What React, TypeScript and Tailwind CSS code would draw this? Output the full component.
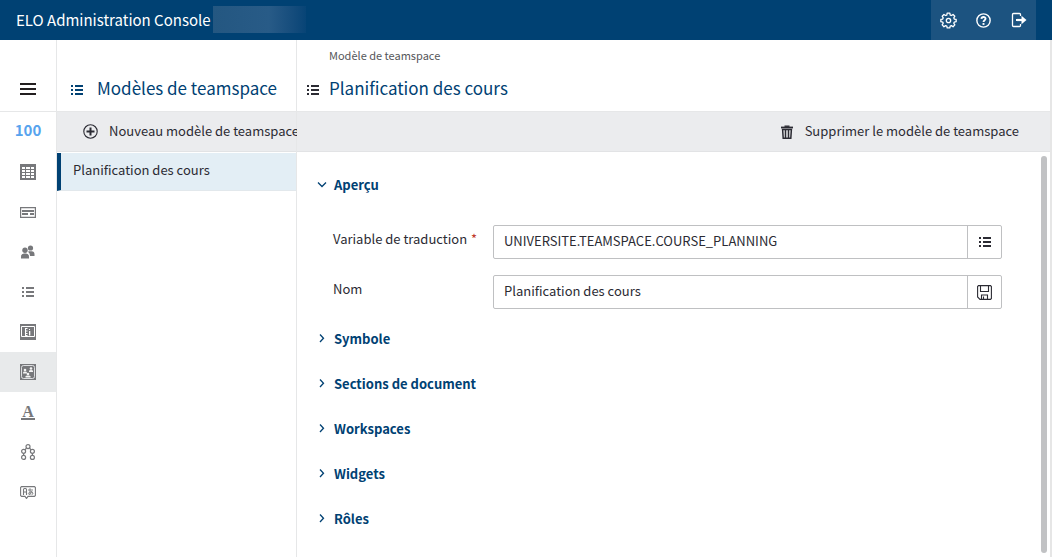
import type { ReactNode } from 'react';

const sections = ['Symbole', 'Sections de document', 'Workspaces', 'Widgets', 'Rôles'];

function ListIcon() {
  return (
    <svg width="12" height="10" viewBox="0 0 12 10" fill="currentColor" shapeRendering="crispEdges" aria-hidden="true">
      <path d="M0 0h2v2H0zM4 0h8v2H4zM0 4h2v2H0zM4 4h8v2H4zM0 8h2v2H0zM4 8h8v2H4z" />
    </svg>
  );
}

function MenuIcon() {
  return (
    <svg width="16" height="12" viewBox="0 0 16 12" fill="currentColor" shapeRendering="crispEdges" aria-hidden="true">
      <path d="M0 0h16v2H0zM0 5h16v2H0zM0 10h16v2H0z" />
    </svg>
  );
}

function GearIcon() {
  return (
    <svg width="17" height="17" viewBox="0 0 18 18" fill="none" stroke="currentColor" strokeWidth="1.4" strokeLinejoin="round" aria-hidden="true">
      <path d="M7.6 1.2h2.8l.4 2 1.3.5 1.7-1.1 1.9 1.9-1.1 1.7.5 1.3 2 .4v2.3l-2 .5-.5 1.2 1.1 1.7-1.9 2-1.7-1.2-1.3.5-.4 2H7.6l-.4-2-1.3-.5-1.7 1.2-1.9-2 1.1-1.7-.5-1.2-2-.5V7.9l2-.4.5-1.3-1.1-1.7 1.9-1.9 1.7 1.1 1.3-.5z" />
      <circle cx="9" cy="9" r="2.3" />
    </svg>
  );
}

function HelpIcon() {
  return (
    <svg width="15" height="15" viewBox="0 0 16 16" fill="none" stroke="currentColor" aria-hidden="true">
      <circle cx="8" cy="8" r="7.1" strokeWidth="1.5" />
      <path d="M5.8 6.3C5.9 3.5 10.3 3.7 10.2 6.2C10.1 7.7 8 7.7 8 9.6" strokeWidth="2" />
      <path d="M7 10.7h2v2H7z" fill="currentColor" stroke="none" />
    </svg>
  );
}

function LogoutIcon() {
  return (
    <svg width="16" height="16" viewBox="0 0 16 16" fill="none" stroke="currentColor" aria-hidden="true">
      <path d="M9.5 4V2.500q0-1-1-1H2.500q-1 0-1 1v11q0 1 1 1h6q1 0 1-1V12" strokeWidth="1.3" />
      <path d="M5 8h7" strokeWidth="2.2" />
      <path d="M10.5 3.800l5 4.200-5 4.200z" fill="currentColor" stroke="none" />
    </svg>
  );
}

function PlusIcon() {
  return (
    <svg width="15" height="15" viewBox="0 0 15 15" fill="none" stroke="currentColor" aria-hidden="true">
      <circle cx="7.5" cy="7.5" r="6.7" strokeWidth="1.1" />
      <path d="M7.5 3.5v8M3.5 7.5h8" strokeWidth="2" />
    </svg>
  );
}

function TrashIcon() {
  return (
    <svg width="12" height="14" viewBox="0 0 12 14" fill="none" stroke="currentColor" aria-hidden="true">
      <path d="M3.5 1.200h5" strokeWidth="1.400" />
      <path d="M0 2.500h12" strokeWidth="1.800" />
      <path d="M1.600 4.500l.6 8.800h7.600l.6-8.800zM4.500 4.500v9M7.500 4.500v9" strokeWidth="1.5" />
    </svg>
  );
}

function SaveIcon() {
  return (
    <svg width="15" height="15" viewBox="0 0 15 15" fill="none" stroke="currentColor" strokeWidth="1.1" aria-hidden="true">
      <path d="M1.5.6h12l.9.9v12l-.9.9H3L.6 12V1.500zM3.500.6v5.900h8V.6M4.500 14.400V10h6v4.400M6.500 11.500v3" />
    </svg>
  );
}

function Chevron({ open = false }: { open?: boolean }) {
  return (
    <svg width="10" height="12" viewBox="0 0 10 12" fill="none" stroke="currentColor" strokeWidth="1.3" aria-hidden="true">
      <path d={open ? 'M1 3.500l4 4 4-4' : 'M3 1.500l3.500 3.700L3 9'} />
    </svg>
  );
}

function TableIcon() {
  return (
    <svg width="16" height="16" viewBox="0 0 16 16" aria-hidden="true">
      <path fill="currentColor" d="M0 0h16v16H0z" />
      <path fill="#fff" d="M2 3h3v2H2zM6 3h4v2H6zM11 3h3v2h-3zM2 6h3v2H2zM6 6h4v2H6zM11 6h3v2h-3zM2 9h3v2H2zM6 9h4v2H6zM11 9h3v2h-3zM2 12h3v2H2zM6 12h4v2H6zM11 12h3v2h-3z" />
    </svg>
  );
}

function FormIcon() {
  return (
    <svg width="16" height="11" viewBox="0 0 16 11" fill="none" stroke="currentColor" aria-hidden="true">
      <path d="M.6.6h14.800v9.800H.6z" strokeWidth="1.200" />
      <path d="M2 4h12M2 7h6M10 7h4" strokeWidth="2" />
    </svg>
  );
}

function UsersIcon() {
  return (
    <svg width="14" height="14" viewBox="0 0 14 14" fill="currentColor" aria-hidden="true">
      <circle cx="9.500" cy="3" r="2.600" />
      <path d="M7.500 6.300h3q3 0 3 3V11H9Q9 8 7.200 7z" />
      <circle cx="4" cy="5.200" r="2.700" />
      <path d="M0 13.500v-1.700Q0 8.500 3 8.500h2q3 0 3 3.300v1.700z" />
    </svg>
  );
}

function DossierIcon() {
  return (
    <svg width="16" height="16" viewBox="0 0 16 16" aria-hidden="true">
      <path fill="currentColor" d="M0 0h16v16H0z" />
      <path fill="none" stroke="#fff" d="M1.500 2.500h13v10h-13z" />
      <path fill="#fff" d="M5 4h1v8H5zM6 4h1.500v1H6zM6 6.500h1.500v1H6zM6 9h1.500v1H6zM6 11h1.500v1H6zM9 5h1v1H9zM9 7h1.300v4.500H9z" />
    </svg>
  );
}

function TeamspaceIcon() {
  return (
    <svg width="16" height="16" viewBox="0 0 16 16" aria-hidden="true">
      <path fill="currentColor" d="M0 0h16v16H0z" />
      <rect x="1.500" y="1.500" width="13" height="13" rx="2" fill="none" stroke="#e8eaec" strokeWidth=".9" />
      <g fill="#f4f4f4">
        <circle cx="11" cy="4.500" r="1.300" />
        <path d="M9 8V7q0-1 2-1t2 1v1z" />
        <circle cx="5" cy="6" r="1.300" />
        <path d="M3 9.500v-1q0-1 2-1t2 1v1z" />
        <circle cx="8" cy="10" r="1.300" />
        <path d="M5.500 13.500v-1q0-1 2.500-1t2.500 1v1z" />
      </g>
    </svg>
  );
}

function NetworkIcon() {
  return (
    <svg width="14" height="16" viewBox="0 0 14 16" fill="none" stroke="currentColor" strokeWidth="1.2" aria-hidden="true">
      <circle cx="7" cy="2.600" r="2" />
      <circle cx="2.600" cy="7.300" r="2" />
      <circle cx="11.400" cy="7.300" r="2" />
      <circle cx="2.600" cy="13.400" r="2" />
      <circle cx="11.400" cy="13.400" r="2" />
      <path d="M5.500 4L4 5.800M8.500 4L10 5.800M2.600 9.300v2.100M11.400 9.300v2.100" />
    </svg>
  );
}

function TranslateIcon() {
  return (
    <svg width="16" height="13" viewBox="0 0 16 13" fill="none" stroke="currentColor" aria-hidden="true">
      <path d="M1.500.6h13l.9.900v8l-.9.900H8L6.500 12.500 5 10.400H1.500l-.9-.9v-8z" strokeWidth="1.100" />
      <path d="M3.500 9V3.500q0-1 1-1h1q1 0 1 1V9M3.500 6h3" strokeWidth="1.100" />
      <path d="M8 4h5M10 2.200v6.500M12 5Q11 8.500 9 8.500 7.500 7.500 9.500 6.200 12 5 13 7 13 8.500 11.500 8.800" strokeWidth=".9" />
    </svg>
  );
}

const navItems: { label: string; icon: ReactNode; active?: boolean }[] = [
  { label: 'Tables', icon: <TableIcon /> },
  { label: 'Formulaires', icon: <FormIcon /> },
  { label: 'Utilisateurs', icon: <UsersIcon /> },
  { label: 'Listes', icon: <ListIcon /> },
  { label: 'Dossiers', icon: <DossierIcon /> },
  { label: 'Teamspaces', icon: <TeamspaceIcon />, active: true },
  {
    label: 'Polices',
    icon: (
      <span className="w-3.5 border-b-2 border-current text-center font-['Liberation_Serif',serif] text-[16px] leading-[13px] font-bold">
        A
      </span>
    ),
  },
  { label: 'Réseau', icon: <NetworkIcon /> },
  { label: 'Traductions', icon: <TranslateIcon /> },
];

function Field({ id, label, value, required, action, icon }: {
  id: string;
  label: string;
  value: string;
  required?: boolean;
  action: string;
  icon: ReactNode;
}) {
  return (
    <div className="flex">
      <label htmlFor={id} className="w-40 shrink-0 pt-1 leading-5">
        {label}
        {required && <span className="ml-1 text-[#c0392b]">*</span>}
      </label>
      <div className="flex h-[34px] min-w-0 flex-1 rounded-xs border border-[#bfc0c2]">
        <input id={id} defaultValue={value} className="min-w-0 flex-1 px-2.5 pb-0.5 outline-none" />
        <button aria-label={action} className="flex w-[34px] items-center justify-center border-l border-[#bfc0c2]">
          {icon}
        </button>
      </div>
    </div>
  );
}

export default function App() {
  return (
    <div className="flex h-screen flex-col bg-white font-['Noto_Sans_CJK_SC',sans-serif] text-[13px] text-[#2b2b33]">
      <header className="flex h-10 shrink-0 items-center bg-[#004173] pr-4 pb-px pl-4 text-white">
        <span className="text-[15px] leading-5 whitespace-nowrap">ELO Administration Console</span>
        <span className="ml-0.5 h-[27px] w-[93px] bg-linear-to-r from-[#245781] via-[#285b87] via-60% to-[#074476]" />
        <div className="ml-auto flex h-10 self-start bg-[#1c5380]">
          <button aria-label="Paramètres" className="flex w-[35px] items-center justify-center">
            <GearIcon />
          </button>
          <button aria-label="Aide" className="flex w-[35px] items-center justify-center">
            <HelpIcon />
          </button>
          <button aria-label="Déconnexion" className="flex w-[35px] items-center justify-center">
            <LogoutIcon />
          </button>
        </div>
      </header>

      <div className="flex min-h-0 flex-1 border-r-2 border-[#e6e6e6]">
        <nav className="flex w-[57px] shrink-0 flex-col border-r border-[#e6e7e8] text-[#77787b]">
          <button aria-label="Menu" className="flex h-[72px] items-end justify-center border-b border-[#e6e7e8] pb-4 text-[#231f20]">
            <MenuIcon />
          </button>
          <a href="#100" className="flex h-10 items-center justify-center pb-[3px] text-[15px] font-bold text-[#57a3ee]">100</a>
          {navItems.map((item) => (
            <a
              key={item.label}
              href="#nav"
              aria-label={item.label}
              className={item.active ? 'flex h-10 items-center justify-center bg-[#e8eaeb]' : 'flex h-10 items-center justify-center'}
            >
              {item.icon}
            </a>
          ))}
        </nav>

        <aside className="flex w-60 shrink-0 flex-col border-r border-[#e6e7e8]">
          <div className="flex h-[72px] items-end gap-3.5 border-b border-[#e6e7e8] pb-[9px] pl-3.5 text-[#004173]">
            <span className="pb-[7px]">
              <ListIcon />
            </span>
            <h2 className="text-[17px] leading-7 whitespace-nowrap">Modèles de teamspace</h2>
          </div>
          <button className="flex h-10 items-center gap-[11px] border-b border-[#e2e3e5] bg-[#ebecee] pl-[26px] whitespace-nowrap">
            <span className="shrink-0">
              <PlusIcon />
            </span>
            <span className="pb-0.5">Nouveau modèle de teamspace</span>
          </button>
          <a href="#planification" className="mt-px flex h-[38px] items-center border-b border-l-4 border-b-[#e2e8ec] border-l-[#004173] bg-[#e3eef5] pb-1 pl-3">
            Planification des cours
          </a>
        </aside>

        <main className="flex min-w-0 flex-1 flex-col">
          <div className="flex h-[72px] items-end gap-2.5 border-b border-[#e6e7e8] pb-[9px] pl-2.5">
            <span className="pb-[7px]">
              <ListIcon />
            </span>
            <div>
              <p className="text-[11px] leading-4 text-[#55565a]">Modèle de teamspace</p>
              <h1 className="pt-[11px] text-[17px] leading-7 text-[#004173]">Planification des cours</h1>
            </div>
          </div>
          <div className="flex h-10 shrink-0 items-center justify-end border-b border-[#e2e3e5] bg-[#ebecee] pr-[31px]">
            <button className="flex items-center gap-3">
              <TrashIcon />
              <span className="pb-0.5">Supprimer le modèle de teamspace</span>
            </button>
          </div>

          <div className="flex min-h-0 flex-1">
            <div className="min-w-0 flex-1 overflow-hidden pt-[23px] pr-[39px] pl-5">
              <button aria-expanded="true" className="flex h-5 items-center gap-[7px] font-bold text-[#004173]">
                <Chevron open />
                Aperçu
              </button>
              <div className="flex flex-col gap-4 pt-[30px] pb-5 pl-4">
                <Field id="translation" label="Variable de traduction" value="UNIVERSITE.TEAMSPACE.COURSE_PLANNING" required action="Choisir" icon={<ListIcon />} />
                <Field id="name" label="Nom" value="Planification des cours" action="Enregistrer" icon={<SaveIcon />} />
              </div>
              <div className="flex flex-col gap-[25px]">
                {sections.map((title) => (
                  <button key={title} aria-expanded="false" className="flex h-5 items-center gap-[7px] font-bold text-[#004173]">
                    <Chevron />
                    {title}
                  </button>
                ))}
              </div>
            </div>
            <div className="my-1 mr-[3px] w-1.5 rounded-full bg-[#c1c2c4]" />
          </div>
        </main>
      </div>
    </div>
  );
}
